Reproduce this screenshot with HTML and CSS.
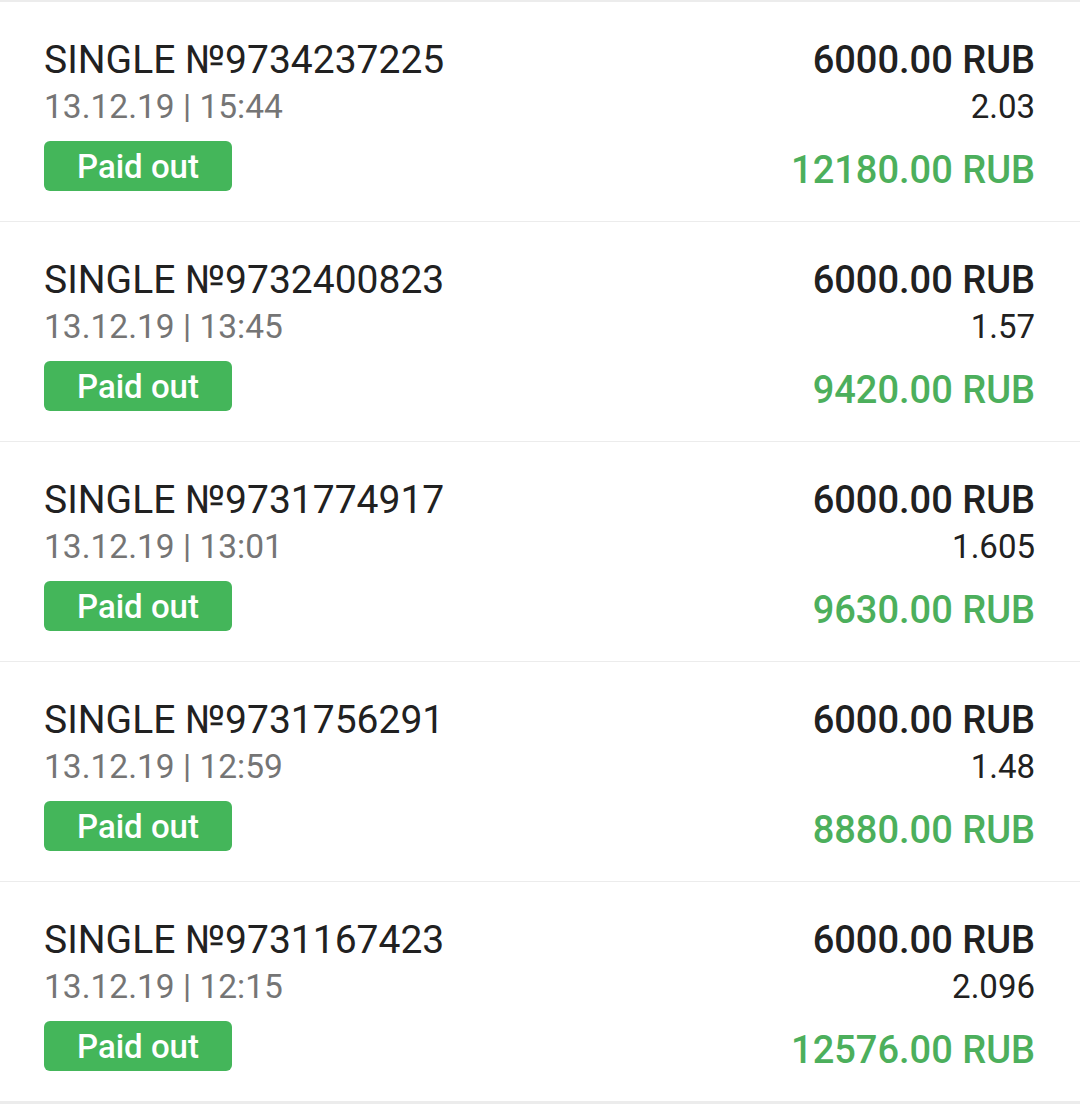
FILE: index.html
```html
<!DOCTYPE html>
<html>
<head>
<meta charset="utf-8">
<link rel="stylesheet" href="styles.css">
</head>
<body>
<div class="list">
  <div class="row">
    <div class="left">
      <div class="title">SINGLE №9734237225</div>
      <div class="date">13.12.19 | 15:44</div>
      <div class="badge">Paid out</div>
    </div>
    <div class="right">
      <div class="stake">6000.00 RUB</div>
      <div class="odds">2.03</div>
      <div class="win">12180.00 RUB</div>
    </div>
  </div>
  <div class="row">
    <div class="left">
      <div class="title">SINGLE №9732400823</div>
      <div class="date">13.12.19 | 13:45</div>
      <div class="badge">Paid out</div>
    </div>
    <div class="right">
      <div class="stake">6000.00 RUB</div>
      <div class="odds">1.57</div>
      <div class="win">9420.00 RUB</div>
    </div>
  </div>
  <div class="row">
    <div class="left">
      <div class="title">SINGLE №9731774917</div>
      <div class="date">13.12.19 | 13:01</div>
      <div class="badge">Paid out</div>
    </div>
    <div class="right">
      <div class="stake">6000.00 RUB</div>
      <div class="odds">1.605</div>
      <div class="win">9630.00 RUB</div>
    </div>
  </div>
  <div class="row">
    <div class="left">
      <div class="title">SINGLE №9731756291</div>
      <div class="date">13.12.19 | 12:59</div>
      <div class="badge">Paid out</div>
    </div>
    <div class="right">
      <div class="stake">6000.00 RUB</div>
      <div class="odds">1.48</div>
      <div class="win">8880.00 RUB</div>
    </div>
  </div>
  <div class="row">
    <div class="left">
      <div class="title">SINGLE №9731167423</div>
      <div class="date">13.12.19 | 12:15</div>
      <div class="badge">Paid out</div>
    </div>
    <div class="right">
      <div class="stake">6000.00 RUB</div>
      <div class="odds">2.096</div>
      <div class="win">12576.00 RUB</div>
    </div>
  </div>
</div>
</body>
</html>
```
FILE: styles.css
```css
html, body {
  margin: 0;
  padding: 0;
  background: #ececec;
  font-family: Roboto, "Noto Sans", sans-serif;
}
.list {
  display: flex;
  flex-direction: column;
  gap: 1px;
  padding-top: 2px;
  width: 1080px;
  height: 1104px;
  box-sizing: border-box;
}
.row {
  height: 219px;
  background: #fff;
  display: flex;
  justify-content: space-between;
  padding: 34px 45px 0 44px;
  box-sizing: border-box;
}
.left, .right {
  display: flex;
  flex-direction: column;
}
.right {
  align-items: flex-end;
}
.title {
  font-size: 39px;
  line-height: 48px;
  color: #212121;
}
.date {
  font-size: 33.5px;
  line-height: 46px;
  color: #757575;
}
.badge {
  margin-top: 11px;
  width: 188px;
  height: 50px;
  box-sizing: border-box;
  padding-top: 2px;
  border-radius: 6px;
  background: #44b65a;
  color: #fff;
  font-size: 33px;
  font-weight: 500;
  line-height: 48px;
  text-align: center;
}
.stake {
  font-size: 38px;
  line-height: 48px;
  font-weight: 500;
  color: #212121;
}
.odds {
  font-size: 33px;
  line-height: 46px;
  color: #212121;
}
.win {
  margin-top: 15px;
  font-size: 38px;
  line-height: 50px;
  font-weight: 500;
  color: #4caf5c;
}
```
